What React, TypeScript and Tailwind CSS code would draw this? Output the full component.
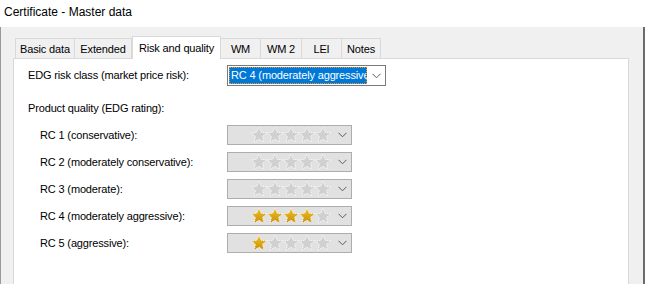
import React from 'react';

const tabs = [
  { label: 'Basic data', w: 'w-[60px]' },
  { label: 'Extended', w: 'w-[58px]' },
  { label: 'Risk and quality', w: 'w-[89px]', active: true },
  { label: 'WM', w: 'w-[41px]' },
  { label: 'WM 2', w: 'w-[42px]' },
  { label: 'LEI', w: 'w-[41px]' },
  { label: 'Notes', w: 'w-[40px]' },
];

const ratings = [
  { label: 'RC 1 (conservative):', stars: 0 },
  { label: 'RC 2 (moderately conservative):', stars: 0 },
  { label: 'RC 3 (moderate):', stars: 0 },
  { label: 'RC 4 (moderately aggressive):', stars: 4 },
  { label: 'RC 5 (aggressive):', stars: 1 },
];

const Chevron: React.FC = () => (
  <svg width="9" height="6" viewBox="0 0 9 6" className="shrink-0">
    <path d="M0.5 0.8 L4.5 4.8 L8.5 0.8" fill="none" stroke="#5a5a5a" strokeWidth="1" />
  </svg>
);

const Star: React.FC<{ on: boolean }> = ({ on }) => (
  <svg width="16" height="16" viewBox="0 0 16 16" className="shrink-0">
    <defs>
      <linearGradient id="gold" x1="0" y1="0" x2="0" y2="1">
        <stop offset="0" stopColor="#f0bf2a" />
        <stop offset="1" stopColor="#c89204" />
      </linearGradient>
    </defs>
    <path
      d="M8 0.3 L10.3 5.3 L15.7 5.8 L11.6 9.4 L12.9 15.2 L8 12.3 L3.1 15.2 L4.4 9.4 L0.3 5.8 L5.7 5.3 Z"
      fill={on ? 'url(#gold)' : '#d0d0d0'}
      stroke="#ffffff"
      strokeWidth="0.9"
      strokeDasharray="1 0.8"
    />
  </svg>
);

const RatingBox: React.FC<{ stars: number }> = ({ stars }) => (
  <div className="w-[125px] h-[20px] bg-[#e1e1e1] border border-[#adadad] flex items-center pl-[23px] pr-[4px]">
    <div className="flex">
      {[0, 1, 2, 3, 4].map((i) => (
        <Star key={i} on={i < stars} />
      ))}
    </div>
    <div className="flex-1" />
    <Chevron />
  </div>
);

export default function App() {
  return (
    <div
      className="w-[645px] h-[284px] bg-[#f0f0f0] flex flex-col overflow-hidden text-[11px] tracking-[-0.15px] text-black"
      style={{ fontFamily: '"Liberation Sans", Arial, sans-serif' }}
    >
      <div className="h-[27px] bg-white pl-[4px] pt-[4px] text-[12px] tracking-normal leading-[16px]">
        Certificate - Master data
      </div>
      <div className="flex-1 flex flex-col border-l border-[#9a9a9a] border-r-2 border-r-[#6b6b6b] pl-[12px] pr-[12px] pt-[9px]">
        <div className="flex items-end h-[22px] pl-[2px] relative z-10">
          {tabs.map((t) =>
            t.active ? (
              <div
                key={t.label}
                className={`${t.w} h-[23px] -mb-px bg-white border border-[#d9d9d9] border-b-0 flex items-center justify-center whitespace-nowrap leading-[14px]`}
              >
                {t.label}
              </div>
            ) : (
              <div
                key={t.label}
                className={`${t.w} h-[20px] bg-[#f0f0f0] border border-[#d9d9d9] border-b-0 -ml-px first:ml-0 flex items-center justify-center whitespace-nowrap leading-[14px]`}
              >
                {t.label}
              </div>
            )
          )}
        </div>
        <div className="w-[616px] flex-1 bg-white border border-[#d9d9d9] border-b-0 pl-[14px] pt-[6px] flex flex-col">
          <div className="flex items-center h-[21px]">
            <div className="w-[199px] whitespace-nowrap">EDG risk class (market price risk):</div>
            <div className="w-[159px] h-[21px] border border-[#7a7a7a] bg-white flex items-center p-[1px] pr-[4px]">
              <div className="w-[138px] h-full bg-[#0078d7] text-white leading-[17px] pl-[2px] overflow-hidden whitespace-nowrap outline outline-1 outline-dotted outline-[#f39a1e] -outline-offset-1">
                RC 4 (moderately aggressive)
              </div>
              <div className="flex-1" />
              <Chevron />
            </div>
          </div>
          <div className="mt-[14px] h-[16px] leading-[16px]">Product quality (EDG rating):</div>
          <div className="mt-[9px] flex flex-col gap-[7px]">
            {ratings.map((r) => (
              <div key={r.label} className="flex items-center h-[20px]">
                <div className="w-[187px] ml-[12px] whitespace-nowrap">{r.label}</div>
                <RatingBox stars={r.stars} />
              </div>
            ))}
          </div>
        </div>
      </div>
    </div>
  );
}
